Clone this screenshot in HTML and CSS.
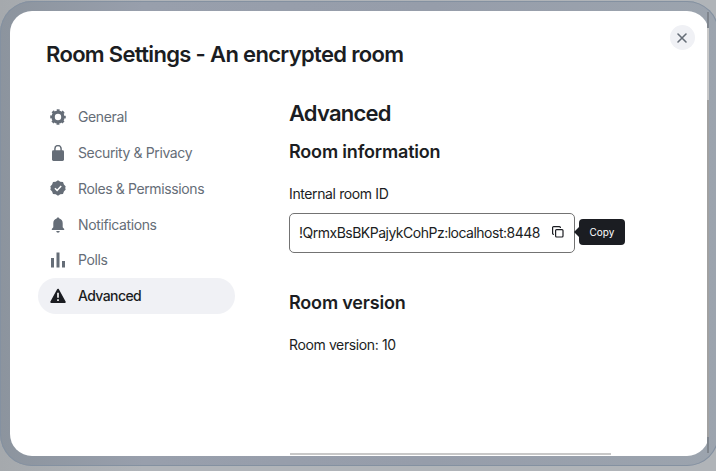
FILE: index.html
```
<!DOCTYPE html>
<html lang="en">
<head>
    <meta charset="UTF-8">
    <meta name="viewport" content="width=device-width, initial-scale=1.0">
    <title>Room Settings</title>
    <link rel="stylesheet" href="styles.css">
</head>
<body>

<div class="dialog-border">
    <div class="dialog">
        <button class="close-button" aria-label="Close">
            <svg width="12" height="12" viewBox="0 0 12 12"><path d="M2 2l8 8M10 2l-8 8" fill="none" stroke="#656d77" stroke-width="1.6" stroke-linecap="round"/></svg>
        </button>
        <h1 class="dialog-title">Room Settings - An encrypted room</h1>
        <div class="dialog-body">
            <nav class="tabs">
                <a class="tab">
                    <svg class="tab-icon" viewBox="0 0 16 16"><circle cx="8" cy="8" r="4.9" fill="none" stroke="currentColor" stroke-width="3.4"/><circle cx="8" cy="8" r="6.7" fill="none" stroke="currentColor" stroke-width="2.2" stroke-dasharray="2.8 2.462" stroke-dashoffset="1.4"/></svg>
                    <span>General</span>
                </a>
                <a class="tab">
                    <svg class="tab-icon" viewBox="0 0 16 16"><rect x="2" y="5.3" width="12" height="10.7" rx="1.4" fill="currentColor"/><path d="M4.9 6V3.7a3.1 3.1 0 0 1 6.2 0V6" fill="none" stroke="currentColor" stroke-width="1.5"/></svg>
                    <span>Security &amp; Privacy</span>
                </a>
                <a class="tab">
                    <svg class="tab-icon" viewBox="0 0 16 16"><path d="M8 .3l2.3 1.4 2.7.3.9 2.5 1.800 2L15.200 8l.5 1.500-1.800 2-.9 2.500-2.700.3L8 15.700l-2.300-1.400-2.700-.3-.9-2.500-1.800-2L.8 8 .3 6.500l1.800-2L3 2l2.700-.3z" fill="currentColor"/><path d="M4.900 8.300l2.200 2.100 4.100-4.500" fill="none" stroke="#fff" stroke-width="1.500"/></svg>
                    <span>Roles &amp; Permissions</span>
                </a>
                <a class="tab">
                    <svg class="tab-icon tab-icon-bell" viewBox="0 0 16 16"><path d="M8 .4c.8 0 1.300.5 1.300 1.200C11.600 2.200 12.700 4 12.700 6.300v3.900l1.500 1.700v1.200H1.800v-1.200l1.500-1.700V6.300c0-2.300 1.100-4.100 3.400-4.700C6.700.9 7.200.4 8 .4zM6.300 14h3.400c0 1-.7 1.700-1.700 1.700S6.300 15 6.300 14z" fill="currentColor"/></svg>
                    <span>Notifications</span>
                </a>
                <a class="tab">
                    <svg class="tab-icon" viewBox="0 0 16 16"><path d="M1 6h3v9.500H1zM6.500.5h3v15h-3zM12 9h3v6.500h-3z" fill="currentColor"/></svg>
                    <span>Polls</span>
                </a>
                <a class="tab tab-active">
                    <svg class="tab-icon" viewBox="0 0 16 16"><path d="M8 1.700L14.700 14H1.300z" fill="currentColor" stroke="currentColor" stroke-width="2" stroke-linejoin="round"/><path d="M8 4.800v5M8 11.300v1.700" fill="none" stroke="#fff" stroke-width="1.600"/></svg>
                    <span>Advanced</span>
                </a>
            </nav>
            <main class="content">
                <h2>Advanced</h2>
                <h3>Room information</h3>
                <p class="label">Internal room ID</p>
                <div class="copy-row">
                    <div class="copy-field">
                        <span class="room-id">!QrmxBsBKPajykCohPz:localhost:8448</span>
                        <svg class="copy-icon" viewBox="0 0 12 12" fill="none" stroke="#1b1d22" stroke-width="1.200"><rect x="3.600" y="3.600" width="7.400" height="7.400" rx="1"/><path d="M1.900 8.400H1.600a1 1 0 0 1-1-1V1.600a1 1 0 0 1 1-1h5.800a1 1 0 0 1 1 1v.3"/></svg>
                    </div>
                    <div class="tooltip">Copy</div>
                </div>
                <h3 class="version-title">Room version</h3>
                <p class="version">Room version: 10</p>
            </main>
        </div>
        <div class="scroll-x"></div>
    </div>
    <div class="scroll-y"></div>
</div>

</body>
</html>
```
FILE: styles.css
```
* {
    box-sizing: border-box;
}

body {
    margin: 0;
    height: 471px;
    padding-top: 1px;
    overflow: hidden;
    background: linear-gradient(90deg, #a5a9ad, #b0b4b9 20%, #b0b4b8);
    font-family: Inter, "Liberation Sans", sans-serif;
    font-size: 14px;
    letter-spacing: -0.38px;
    color: #1b1d22;
}

.dialog-border {
    position: relative;
    width: 719px;
    height: 465px;
    padding: 10px;
    border-radius: 32px;
    background: linear-gradient(90deg, #8c949e, #989fac 20%, #969daa 60%, #9ca4ae);
    box-shadow: inset 0 0 0 1px #8491a1;
}

.dialog {
    position: relative;
    width: 699px;
    height: 445px;
    padding: 29px 28px 0;
    border-radius: 22px;
    background: #fff;
}

h1, h2, h3, p {
    margin: 0;
    font-weight: 600;
}

.dialog-title {
    padding-left: 8px;
    font-size: 22px;
    line-height: 28px;
    letter-spacing: -0.67px;
}

.close-button {
    position: absolute;
    top: 14px;
    right: 14px;
    width: 25px;
    height: 25px;
    display: flex;
    align-items: center;
    justify-content: center;
    padding: 0 1px 0 0;
    border: none;
    border-radius: 50%;
    background: #f0f1f5;
}

.dialog-body {
    display: flex;
    gap: 54px;
    padding-top: 31px;
}

.tabs {
    width: 197px;
}

.tab {
    display: flex;
    align-items: center;
    gap: 12px;
    height: 35.75px;
    padding-left: 12px;
    border-radius: 18px;
    color: #656d77;
}

.tab-icon {
    width: 16px;
    height: 16px;
}

.tab-icon-bell {
    margin-top: 1px;
}

.tab-active {
    background: #f0f1f5;
    color: #1b1d22;
    font-weight: 500;
    letter-spacing: -0.6px;
}

.content h2 {
    font-size: 22px;
    line-height: 28px;
    letter-spacing: -0.8px;
}

.content h3 {
    margin-top: 13px;
    font-size: 18px;
    line-height: 24px;
    letter-spacing: -0.18px;
}

.content p {
    font-weight: 400;
    line-height: 20px;
}

.content .label {
    margin-top: 20px;
}

.copy-row {
    display: flex;
    gap: 4px;
    margin-top: 9px;
}

.copy-field {
    display: flex;
    align-items: center;
    justify-content: space-between;
    width: 286px;
    height: 40px;
    padding: 0 10px 2px 9px;
    border: 1px solid #737373;
    border-radius: 5px;
}

.room-id {
    letter-spacing: -0.5px;
}

.copy-icon {
    flex-shrink: 0;
    width: 12px;
    height: 12px;
}

.tooltip {
    position: relative;
    width: 46px;
    height: 26px;
    margin-top: 6px;
    border-radius: 4px;
    background: #1b1d22;
    color: #fff;
    font-size: 10px;
    line-height: 26px;
    letter-spacing: 0;
    text-align: center;
}

.tooltip::before {
    content: "";
    position: absolute;
    left: -5px;
    top: 8px;
    border: 5px solid transparent;
    border-left: 0;
    border-right-color: #1b1d22;
}

.content .version-title {
    margin-top: 38px;
}

.content .version {
    margin-top: 20px;
}

.scroll-x {
    position: absolute;
    left: 280px;
    bottom: 1px;
    width: 321px;
    height: 2px;
    background: #c8c8c8;
}

/* scrollbar on the right edge of the dialog */
.scroll-y {
    position: absolute;
    left: 707px;
    top: 11px;
    width: 2px;
    height: 441px;
    background: linear-gradient(#7f858d 16px, #c8c8c8 16px, #c8c8c8 88px, #a1a1a1 88px, #a1a1a1 425px, #7f858d 425px);
}
```
